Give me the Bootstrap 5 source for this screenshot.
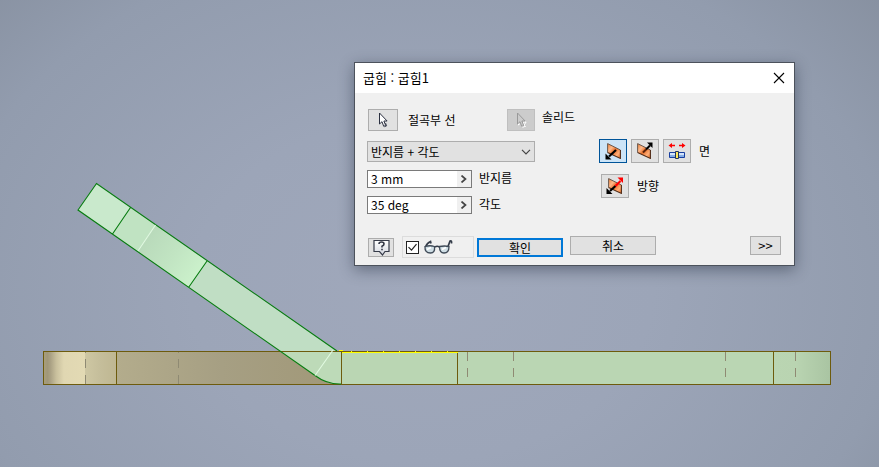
<!DOCTYPE html>
<html lang="ko">
<head>
<meta charset="utf-8">
<meta name="viewport" content="width=device-width, initial-scale=1">
<title>굽힘 : 굽힘1</title>
<link href="https://cdn.jsdelivr.net/npm/bootstrap@5.3.0/dist/css/bootstrap.min.css" rel="stylesheet">
<style>
body { font-family: "Noto Sans CJK KR", sans-serif; font-size: 12px; line-height: 16px; color: #000; }
.viewport3d { background: radial-gradient(ellipse 75% 105% at 48% 62%, #a0a8bb 0%, #9ca5b8 35%, #929cae 72%, #838c9b 100%); }
.scene { width: 100%; height: 100%; }
.bend-dialog { left: 354px; top: 62px; width: 441px; background: #f0f0f0; border: 1px solid #4c525c; box-shadow: 0 4px 14px rgba(20, 28, 45, .42); }
.title-strip { height: 30px; padding-left: 8px; padding-right: 9px; }
.title-text { font-size: 13px; line-height: 20px; }
.dialog-fields { padding: 16px 12px 0; }
.tool { display: flex; align-items: center; justify-content: center; flex: none; width: 28px; height: 24px; padding: 0; border: 1px solid #adadad; background: #e1e1e1; color: #000; }
.tool.active-tool { border-color: #005499; background: #cce4f7; }
.tool:disabled { background: #ccc; border-color: #bfbfbf; }
.pick { height: 22px; }
.pick-main { width: 30px; margin-left: 1px; }
.pick-label { width: 109px; padding: 3px 0 0 10px; }
.solid-label { padding-left: 7px; }
.fields-side { width: 232px; padding-top: 2px; }
.mode-select { appearance: none; width: 168px; height: 21px; padding: 0 20px 0 3px; border: 1px solid #adadad; border-radius: 0; font-size: 12px; line-height: 16px; color: #000;
  background: #e1e1e1 url("data:image/svg+xml,%3Csvg xmlns='http://www.w3.org/2000/svg' width='10' height='6'%3E%3Cpath d='M1 .8l4 4 4-4' fill='none' stroke='%23444' stroke-width='1.2'/%3E%3C/svg%3E") no-repeat right 3px center; background-size: 10px 6px; }
.value-box { width: 105px; height: 18px; border: 1px solid #7a7a7a; background: #fff; }
.value-box input { min-width: 0; flex: 1; padding: 0 3px; border: 0; outline: 0; background: transparent; color: #000; font: 12px/16px "Noto Sans CJK KR", sans-serif; }
.value-box button { width: 14px; padding: 0; border: 0; background: #f0f0f0; }
.value-label { padding-left: 7px; }
.sides { gap: 4px; }
.flip-row { gap: 8px; padding: 11px 0 0 2px; }
.dialog-footer { padding: 22px 13px 7px; }
.push { width: 86px; height: 19px; padding: 0; border: 1px solid #adadad; background: #e1e1e1; color: #000; line-height: 16px; }
.push.default-push { border: 2px solid #0078d7; line-height: 14px; margin-left: 3px; }
.cancel-push { margin-left: 7px; }
.help { width: 26px; height: 19px; }
.preview-box { width: 72px; height: 22px; border: 1px solid #dcdcdc; padding: 0 3px; }
.preview-box input { appearance: none; width: 13px; height: 13px; border: 1px solid #222; margin: 0;
  background: #fff url("data:image/svg+xml,%3Csvg xmlns='http://www.w3.org/2000/svg' width='11' height='11'%3E%3Cpath d='M1.5 5.2l3 3 5-6' fill='none' stroke='%23222' stroke-width='1.2'/%3E%3C/svg%3E") center no-repeat; }
.more { width: 31px; font-size: 13px; }
.low { margin-top: 2px; }
</style>
</head>
<body>
<svg width="0" height="0" class="position-absolute" aria-hidden="true">
  <defs>
    <linearGradient id="orange" x1="0" y1="0" x2="1" y2="1"><stop offset="0" stop-color="#e9813c"/><stop offset=".3" stop-color="#ffb98a"/><stop offset=".5" stop-color="#e8702a"/><stop offset=".75" stop-color="#ffae78"/><stop offset="1" stop-color="#e36c22"/></linearGradient>
    <symbol id="face" viewBox="0 0 14 16"><path d="M.6.6L13.4 7v8.400L.6 9.600z" fill="url(#orange)"/><path d="M.6 9.600V.6L13.400 7" fill="none" stroke="#69584d"/><path d="M13.400 7v8.400L.6 9.600" fill="none" stroke="#4f2b17" stroke-width="1.100"/></symbol>
  </defs>
</svg>
<main class="viewport3d position-relative vh-100 overflow-hidden">
  <svg class="scene d-block" viewBox="0 0 879 467" aria-hidden="true">
    <defs>
      <linearGradient id="brass" gradientUnits="userSpaceOnUse" x1="43" y1="0" x2="341" y2="0">
        <stop offset="0" stop-color="#aaa07c"/><stop offset=".015" stop-color="#a09778"/><stop offset=".025" stop-color="#aaa184"/><stop offset=".045" stop-color="#c9c09d"/><stop offset=".07" stop-color="#e0d7b2"/><stop offset=".14" stop-color="#e3dab4"/><stop offset=".142" stop-color="#cec7a3"/><stop offset=".19" stop-color="#c5be9b"/><stop offset=".245" stop-color="#bfb792"/><stop offset=".247" stop-color="#b3ac8c"/><stop offset=".6" stop-color="#a69f83"/><stop offset="1" stop-color="#a19878"/>
      </linearGradient>
      <linearGradient id="plateEnd"><stop offset="0" stop-color="#bad5b2"/><stop offset=".4" stop-color="#b9d4b1"/><stop offset="1" stop-color="#a9c4a2"/></linearGradient>
      <linearGradient id="holeShade" gradientUnits="userSpaceOnUse" x1="147" y1="238" x2="198" y2="274"><stop offset="0" stop-color="#b9dabb"/><stop offset=".5" stop-color="#c1e4c2"/><stop offset="1" stop-color="#cbf1cb"/></linearGradient>
    </defs>
    <path d="M43.5 351.5h298v33h-298z" fill="url(#brass)"/>
    <path d="M341.5 351.5h432v33h-432z" fill="#bad6b3"/>
    <path d="M773.5 351.5h57v33h-57z" fill="url(#plateEnd)"/>
    <path d="M207 261L337 351h4.500v33.500Q326 384 315 375.500L188.500 287.500z" fill="#c0dec4"/>
    <path d="M280 351.500h61.500v33Q326 384 315 375.500z" fill="#bddab8"/>
    <path d="M96.500 183.500l34 24-18 26.500L78 210z" fill="#c9e9cc"/>
    <path d="M130.500 207.500l25 17.500-17.500 26.500-25.500-17.500z" fill="#c0e3c2"/>
    <path d="M155.500 225L207 261l-18.500 26.500-50.500-36z" fill="url(#holeShade)"/>
    <g fill="none" stroke="#6d5b0d" shape-rendering="crispEdges">
      <path d="M43.500 351.500h787v33h-787zM116.500 351v33M341.500 351v33M457.500 351v33M773.500 351v33"/>
    </g>
    <path d="M85.500 352v1m0 6v9m0 7v9M178.500 352v1m0 6v9m0 7v9M467.500 352v9m0 7v9M513.500 352v9m0 7v9M725.500 352v9m0 7v9M795.500 352v9m0 7v9" fill="none" stroke="#8f8a73" shape-rendering="crispEdges"/>
    <path d="M337 351L96.500 183.500 78 210l237 165.500q12 9 26 8.500M130.500 207.500l-18 26.500M207 261l-18.500 26.500" fill="none" stroke="#087d10" stroke-width="1.100"/>
    <path d="M155.500 225l-17.500 26M333 350l-18 25.500" fill="none" stroke="#e1fae1" stroke-width="1.100"/>
    <path d="M342 352.500h116M339 350.500h4M351 351.500h1m15 0h1m15 0h1m15 0h1m15 0h1m15 0h1m15 0h1" fill="none" stroke="#ff0" shape-rendering="crispEdges"/>
  </svg>

  <section class="bend-dialog position-absolute" role="dialog" aria-labelledby="dialogTitle">
    <header class="title-strip bg-white d-flex align-items-center justify-content-between">
      <h1 class="title-text fw-normal m-0" id="dialogTitle">굽힘 : 굽힘1</h1>
      <button class="btn p-0 border-0 d-flex" type="button" aria-label="닫기"><svg width="12" height="12" viewBox="0 0 12 12"><path d="M1 1l10 10M11 1L1 11" stroke="#000" stroke-width="1.100"/></svg></button>
    </header>
    <form>
      <div class="dialog-fields">
        <div class="d-flex align-items-start">
          <button class="tool pick pick-main" id="pickLine" type="button" aria-labelledby="lineLabel"><svg width="10" height="16" viewBox="0 0 10 16"><path d="M1.500 1v11L4 9.700l1.700 4.600 2-.8L5.900 9h3.200z" fill="#fff" stroke="#2b3040"/><path d="M7.500 11l1.200 2.800-2 1" fill="none" stroke="#2b3040" stroke-width=".8"/></svg></button>
          <label class="pick-label" id="lineLabel" for="pickLine">절곡부 선</label>
          <button class="tool pick" id="pickSolid" type="button" disabled aria-labelledby="solidLabel"><svg width="11" height="17" viewBox="0 0 11 17"><path d="M2.500 2v11L5 10.700l1.700 4.600 2-.8L6.900 10h3.200l-2 3 1.500 2" fill="none" stroke="#fff"/><path d="M1.500 1v11L4 9.700l1.700 4.600 2-.8L5.900 9h3.200z" fill="#ccc" stroke="#999"/></svg></button>
          <label class="solid-label" id="solidLabel" for="pickSolid">솔리드</label>
        </div>
        <div class="d-flex align-items-start pt-2">
          <div class="fields-side">
            <select class="mode-select d-block" aria-label="굽힘 방식"><option>반지름 + 각도</option></select>
            <div class="d-flex align-items-start mt-2">
              <div class="value-box d-flex"><input id="radius" type="text" value="3 mm"><button type="button" aria-label="반지름 옵션"><svg class="d-block mx-auto" width="8" height="8" viewBox="0 0 8 8"><path d="M1.500.5L5.500 4l-4 3.500" fill="none" stroke="#444" stroke-width="1.700"/></svg></button></div>
              <label class="value-label" for="radius">반지름</label>
            </div>
            <div class="d-flex align-items-start mt-2">
              <div class="value-box d-flex"><input id="angle" type="text" value="35 deg"><button type="button" aria-label="각도 옵션"><svg class="d-block mx-auto" width="8" height="8" viewBox="0 0 8 8"><path d="M1.500.5L5.500 4l-4 3.500" fill="none" stroke="#444" stroke-width="1.700"/></svg></button></div>
              <label class="value-label" for="angle">각도</label>
            </div>
          </div>
          <div>
            <div class="sides d-flex align-items-center" role="group" aria-labelledby="sideLabel">
              <button class="tool active-tool" type="button" aria-pressed="true" aria-label="아래쪽 면"><svg width="18" height="18" viewBox="0 0 18 18"><use href="#face" x="3" y="1" width="14" height="16"/><path d="M12 8l-7 6.500" stroke="#000" stroke-width="2.200"/><path d="M1.500 17.500v-6l6 6z"/></svg></button>
              <button class="tool" type="button" aria-label="위쪽 면"><svg width="18" height="18" viewBox="0 0 18 18"><use href="#face" x="1" y="1" width="14" height="16"/><path d="M7 10.500l3-3" stroke="#5b210a" stroke-width="2"/><path d="M10 7.500L14 3.500" stroke="#000" stroke-width="2"/><path d="M11 .5h5.500V6z"/></svg></button>
              <button class="tool" type="button" aria-label="양쪽 면"><svg width="18" height="18" viewBox="0 0 18 18"><path d="M3 3.500h4M11 3.500h4" stroke="#f00" stroke-width="1.300"/><path d="M.5 3.500L4 1v5zM17.500 3.500L14 1v5z" fill="#f00"/><path d="M1.500 10.500h15v5h-15z" fill="#86aee6" stroke="#193fa0"/><path d="M2 12h14" stroke="#d3e4fb" stroke-width="2"/><path d="M7.500 9.500h3v7h-3z" fill="#ffe65a" stroke="#20355f"/></svg></button>
              <span class="ps-1" id="sideLabel">면</span>
            </div>
            <div class="flip-row d-flex align-items-center">
              <button class="tool" id="flip" type="button" aria-labelledby="flipLabel"><svg width="18" height="18" viewBox="0 0 18 18"><use href="#face" x="2" y="1" width="14" height="16"/><path d="M9.500 9L4 14" stroke="#000" stroke-width="2.200"/><path d="M.5 17v-6l6 6z"/><path d="M9.500 9l5-5" stroke="#f00" stroke-width="2.200"/><path d="M11.500.5H17V6z" fill="#f00"/></svg></button>
              <label id="flipLabel" for="flip">방향</label>
            </div>
          </div>
        </div>
      </div>
      <footer class="dialog-footer d-flex align-items-start">
        <button class="tool help low" type="button" aria-label="도움말"><svg width="17" height="17" viewBox="0 0 17 17"><defs><linearGradient id="bubble" x2="0" y2="1"><stop stop-color="#fff"/><stop offset="1" stop-color="#d3d7e0"/></linearGradient></defs><path d="M1 1.500h15v11h-4l-2.500 3.500-3-3.500H1z" fill="url(#bubble)" stroke="#363b49" stroke-width="1.200"/><path d="M6 5q0-2 2.500-2T11 5q0 1.300-2 2.200v1.300M9 9.800v1.500" fill="none" stroke="#333846" stroke-width="1.600"/></svg></button>
        <label class="preview-box d-flex align-items-center gap-1 ms-2"><input type="checkbox" checked aria-label="미리보기"><svg width="30" height="16" viewBox="0 0 30 16"><path d="M2.500 8Q4 4 7.500 2.500l.5 2M25 7.500L27 2q2-1 1.500 2.500M12 8q2-1.500 4.500 0" fill="none" stroke="#343c49" stroke-width="1.700"/><path d="M2 7.500q5-1.500 9.500 0 .8 6.500-4 6.500-6 0-5.500-6.500zM16.500 7.500q5-1 9.500 0 0 6.500-5 6.500-4.500 0-4.500-6.500z" fill="#cfdee5" stroke="#3f4a57" stroke-width="1.300"/><path d="M4 10.500l4-2M19 10.500l4-2" stroke="#fff" stroke-width="1.500"/></svg></label>
        <button class="push default-push low" type="submit">확인</button>
        <button class="push cancel-push" type="button">취소</button>
        <button class="push more ms-auto" type="button" aria-label="더 보기">&gt;&gt;</button>
      </footer>
    </form>
  </section>
</main>
<script src="https://cdn.jsdelivr.net/npm/bootstrap@5.3.0/dist/js/bootstrap.bundle.min.js"></script>
</body>
</html>
